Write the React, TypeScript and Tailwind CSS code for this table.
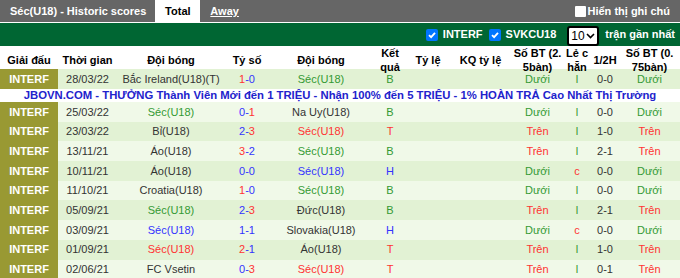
import React from 'react';

type Tone = 'dark' | 'green' | 'red' | 'blue';

interface Match {
    date: string;
    home: string;
    homeTone: Tone;
    score: [string, Tone, string, Tone];
    away: string;
    awayTone: Tone;
    result: string;
    ou: string;
    oe: string;
    half: string;
    ou2: string;
}

const toneClass: Record<Tone, string> = {
    dark: 'text-[#333333]',
    green: 'text-[#339933]',
    red: 'text-[#ff3333]',
    blue: 'text-[#3333ff]',
};

const cols = 'grid grid-cols-[58px_59px_108px_44px_104px_34px_42px_63px_51px_28px_28px_61px]';

const matches: Match[] = [
    { date: '25/03/22', home: 'Séc(U18)', homeTone: 'green', score: ['0-', 'blue', '1', 'red'], away: 'Na Uy(U18)', awayTone: 'dark', result: 'B', ou: 'Dưới', oe: 'l', half: '0-0', ou2: 'Dưới' },
    { date: '23/03/22', home: 'Bỉ(U18)', homeTone: 'dark', score: ['2-', 'blue', '3', 'red'], away: 'Séc(U18)', awayTone: 'red', result: 'T', ou: 'Trên', oe: 'l', half: '1-0', ou2: 'Trên' },
    { date: '13/11/21', home: 'Áo(U18)', homeTone: 'dark', score: ['3', 'red', '-2', 'blue'], away: 'Séc(U18)', awayTone: 'green', result: 'B', ou: 'Trên', oe: 'l', half: '2-1', ou2: 'Trên' },
    { date: '10/11/21', home: 'Áo(U18)', homeTone: 'dark', score: ['0-', 'blue', '0', 'blue'], away: 'Séc(U18)', awayTone: 'blue', result: 'H', ou: 'Dưới', oe: 'c', half: '0-0', ou2: 'Dưới' },
    { date: '11/10/21', home: 'Croatia(U18)', homeTone: 'dark', score: ['1', 'red', '-0', 'blue'], away: 'Séc(U18)', awayTone: 'green', result: 'B', ou: 'Dưới', oe: 'l', half: '0-0', ou2: 'Dưới' },
    { date: '05/09/21', home: 'Séc(U18)', homeTone: 'green', score: ['2-', 'blue', '3', 'red'], away: 'Đức(U18)', awayTone: 'dark', result: 'B', ou: 'Trên', oe: 'l', half: '2-1', ou2: 'Trên' },
    { date: '03/09/21', home: 'Séc(U18)', homeTone: 'blue', score: ['1-', 'blue', '1', 'blue'], away: 'Slovakia(U18)', awayTone: 'dark', result: 'H', ou: 'Dưới', oe: 'c', half: '0-0', ou2: 'Dưới' },
    { date: '01/09/21', home: 'Séc(U18)', homeTone: 'red', score: ['2', 'red', '-1', 'blue'], away: 'Áo(U18)', awayTone: 'dark', result: 'T', ou: 'Trên', oe: 'l', half: '1-0', ou2: 'Trên' },
    { date: '02/06/21', home: 'FC Vsetin', homeTone: 'dark', score: ['0-', 'blue', '3', 'red'], away: 'Séc(U18)', awayTone: 'red', result: 'T', ou: 'Trên', oe: 'l', half: '0-1', ou2: 'Trên' },
];

const first: Match = { date: '28/03/22', home: 'Bắc Ireland(U18)(T)', homeTone: 'dark', score: ['1', 'red', '-0', 'blue'], away: 'Séc(U18)', awayTone: 'green', result: 'B', ou: 'Dưới', oe: 'l', half: '0-0', ou2: 'Dưới' };

const resultTone = (r: string): Tone => (r === 'T' ? 'red' : r === 'H' ? 'blue' : 'green');
const ouTone = (s: string): Tone => (s === 'Trên' ? 'red' : 'green');

const Check = () => (
    <span className="inline-flex w-[12px] h-[12px] items-center justify-center rounded-[2px] bg-[#0075ff]">
        <svg width="10" height="10" viewBox="0 0 10 10">
            <path d="M2 5.2 L4.1 7.2 L8 2.8" fill="none" stroke="white" strokeWidth="1.8" />
        </svg>
    </span>
);

const MatchRow: React.FC<{ m: Match; dark: boolean; height: string }> = ({ m, dark, height }) => (
    <div className={`${cols} ${height} items-center text-center ${dark ? 'bg-[#e2f2d4]' : 'bg-[#f0f9e8]'}`}>
        <div className="h-full flex items-center justify-center bg-[#999933] text-white font-bold">INTERF</div>
        <div className="text-[#333333]">{m.date}</div>
        <div className={`whitespace-nowrap ${toneClass[m.homeTone]}`}>{m.home}</div>
        <div>
            <span className={toneClass[m.score[1]]}>{m.score[0]}</span>
            <span className={toneClass[m.score[3]]}>{m.score[2]}</span>
        </div>
        <div className={`whitespace-nowrap ${toneClass[m.awayTone]}`}>{m.away}</div>
        <div className={toneClass[resultTone(m.result)]}>{m.result}</div>
        <div></div>
        <div></div>
        <div className={toneClass[ouTone(m.ou)]}>{m.ou}</div>
        <div className={m.oe === 'c' ? 'text-[#ff3333]' : 'text-[#339933]'}>{m.oe}</div>
        <div className="text-[#333333]">{m.half}</div>
        <div className={toneClass[ouTone(m.ou2)]}>{m.ou2}</div>
    </div>
);

export default function App() {
    return (
        <div className="w-[680px] h-[278px] overflow-hidden bg-white font-['Liberation_Sans',Arial,sans-serif] text-[11px]">
            <div className="h-[22px] bg-[#666666] flex items-stretch font-bold text-white">
                <div className="pl-[10px] pr-[9px] flex items-center">Séc(U18) - Historic scores</div>
                <div className="w-[45px] bg-white text-black flex items-center justify-center">Total</div>
                <div className="pl-[10px] flex items-center underline">Away</div>
                <div className="ml-auto pr-[10px] flex items-center gap-[2px]">
                    <span className="w-[11px] h-[11px] bg-white rounded-[1px]"></span>
                    <span>Hiển thị ghi chú</span>
                </div>
            </div>
            <div className="h-[1px] bg-white"></div>
            <div className="h-[23px] bg-[#006633] flex items-center justify-end pr-[5px] font-bold text-white">
                <Check />
                <span className="ml-[5px] mr-[6px]">INTERF</span>
                <Check />
                <span className="ml-[5px] mr-[11px]">SVKCU18</span>
                <div className="h-[20px] w-[32px] mt-[2px] bg-white border-2 border-black rounded-[3px] flex items-center justify-between pl-[2px] pr-[2px] text-black font-normal text-[12px]">
                    <span>10</span>
                    <svg width="9" height="6" viewBox="0 0 9 6">
                        <path d="M1 1 L4.5 4.5 L8 1" fill="none" stroke="black" strokeWidth="1.6" />
                    </svg>
                </div>
                <span className="ml-[6px]">trận gần nhất</span>
            </div>
            <div className={`${cols} h-[23px] items-center text-center font-bold text-black leading-[14px] bg-white`}>
                <div>Giải đấu</div>
                <div>Thời gian</div>
                <div>Đội bóng</div>
                <div>Tỷ số</div>
                <div>Đội bóng</div>
                <div>Kết<br />quả</div>
                <div>Tỷ lệ</div>
                <div>KQ tỷ lệ</div>
                <div>Số BT (2.<br />5bàn)</div>
                <div>Lẻ c<br />hẵn</div>
                <div>1/2H</div>
                <div>Số BT (0.<br />75bàn)</div>
            </div>
            <MatchRow m={first} dark={true} height="h-[20px]" />
            <div className="h-[13px] bg-white flex items-center justify-center font-bold text-[#2222cc] text-[11.3px] whitespace-nowrap leading-[13px]">
                JBOVN.COM - THƯỞNG Thành Viên Mới đến 1 TRIỆU - Nhận 100% đến 5 TRIỆU - 1% HOÀN TRẢ Cao Nhất Thị Trường
            </div>
            {matches.map((m, i) => (
                <MatchRow key={m.date} m={m} dark={i % 2 === 1} height="h-[19.7px]" />
            ))}
        </div>
    );
}
